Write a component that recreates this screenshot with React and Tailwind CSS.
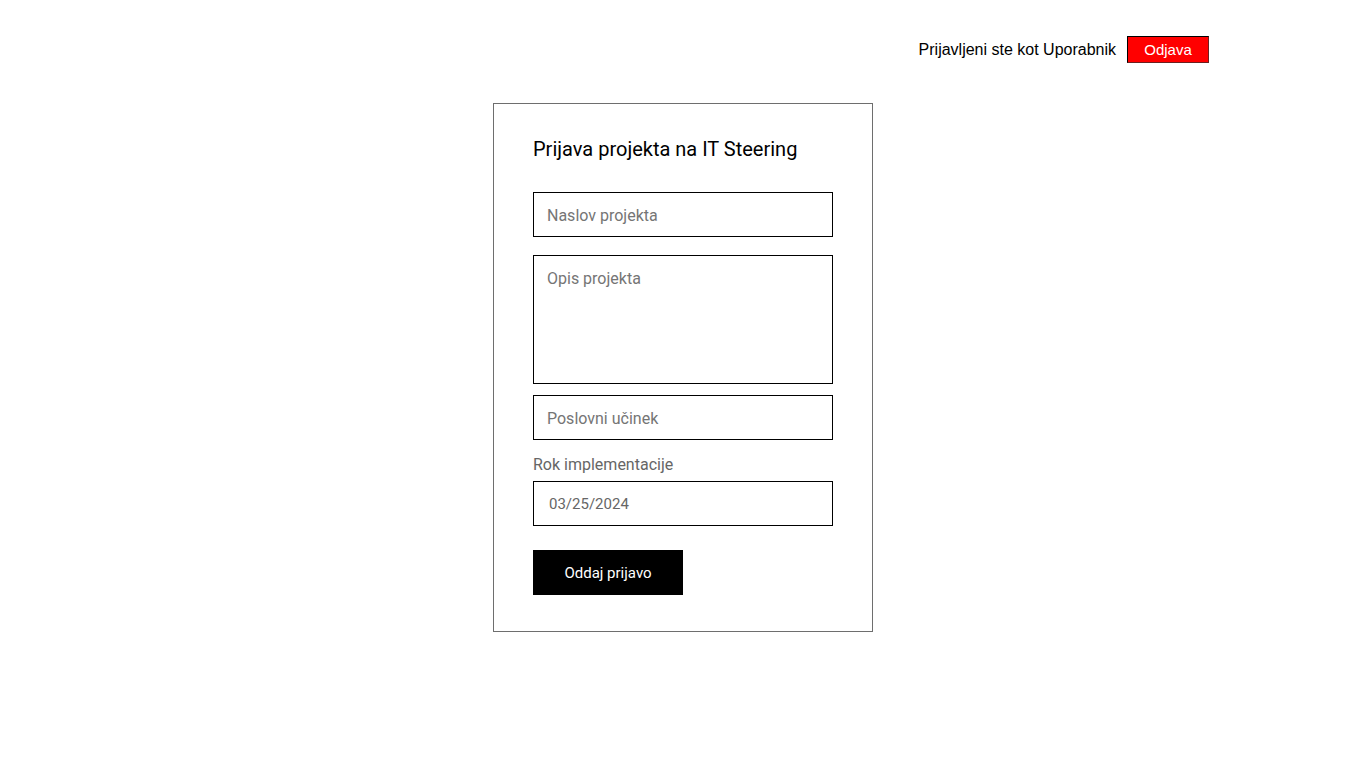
export default function App() {
  return (
    <div className="min-h-screen bg-white">
      <div className="flex justify-end items-center pt-[36px] pr-[157px] gap-[11px] font-['Liberation_Sans',Arial,sans-serif]">
        <span className="text-[16px] text-black leading-none">Prijavljeni ste kot Uporabnik</span>
        <button className="w-[82px] h-[27px] bg-[#ff0000] border border-t-black border-l-black border-r-[#6b2020] border-b-[#6b2020] text-white text-[15px] leading-none">Odjava</button>
      </div>
      <div className="flex justify-center mt-[40px]">
        <div className="w-[380px] h-[529px] border border-[#6e6e6e] px-[39px] pt-[31px] font-['Roboto',sans-serif]">
          <h2 className="text-[20px] leading-[28px] text-black">Prijava projekta na IT Steering</h2>
          <input
            className="mt-[29px] block w-[300px] h-[45px] border border-black px-[13px] pt-[2px] text-[16px] placeholder:text-[#757575] outline-none"
            placeholder="Naslov projekta"
          />
          <textarea
            className="mt-[18px] block w-[300px] h-[129px] border border-black px-[13px] pt-[11px] text-[16px] placeholder:text-[#757575] outline-none resize-none"
            placeholder="Opis projekta"
          />
          <input
            className="mt-[11px] block w-[300px] h-[45px] border border-black px-[13px] pt-[2px] text-[16px] placeholder:text-[#757575] outline-none"
            placeholder="Poslovni učinek"
          />
          <div className="mt-[15px] text-[16px] leading-[20px] text-[#666666]">Rok implementacije</div>
          <input
            className="mt-[6px] block w-[300px] h-[45px] border border-black px-[15px] pt-[1px] text-[15px] text-[#666666] outline-none"
            defaultValue="03/25/2024"
          />
          <button className="mt-[24px] block w-[150px] h-[45px] bg-black text-white text-[15px] pt-[1px]">Oddaj prijavo</button>
        </div>
      </div>
    </div>
  );
}
